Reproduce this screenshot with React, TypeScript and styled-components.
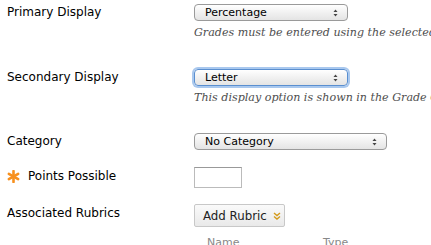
import React from "react"
import styled, { createGlobalStyle, css } from "styled-components"

const GlobalStyle = createGlobalStyle`
  html, body {
    margin: 0;
    padding: 0;
    background: #ffffff;
    overflow: hidden;
  }
  body {
    font-family: "DejaVu Sans", "Liberation Sans", sans-serif;
    color: #000;
  }
`

const Form = styled.div`
  display: flex;
  flex-direction: column;
  padding: 4px 0 0 7px;
  width: 424px;
`

const Row = styled.div<{ $gap: number }>`
  display: grid;
  grid-template-columns: 187px 1fr;
  align-items: start;
  margin-bottom: ${(p) => p.$gap}px;
`

const Label = styled.div<{ $top: number }>`
  display: flex;
  align-items: center;
  gap: 8px;
  font-size: 12px;
  line-height: 16px;
  padding-top: ${(p) => p.$top}px;
  white-space: nowrap;
`

const Field = styled.div`
  display: flex;
  flex-direction: column;
  gap: 5px;
  min-width: 0;
`

const SelectBox = styled.div<{ $width: number; $focused?: boolean }>`
  box-sizing: border-box;
  width: ${(p) => p.$width}px;
  height: 17px;
  border: 1px solid #9a9a9a;
  border-radius: 4px;
  background: linear-gradient(#ffffff, #f1f1f1 50%, #e4e4e4);
  display: flex;
  align-items: center;
  justify-content: space-between;
  padding: 0 9px 0 10px;
  font-size: 11px;
  ${(p) =>
    p.$focused &&
    css`
      border-color: #5a8fd0;
      box-shadow: 0 0 0 2px #a9c8ee;
    `}
`

const Hint = styled.div`
  font-family: "DejaVu Serif", "Liberation Serif", serif;
  font-style: italic;
  font-size: 11.1px;
  color: #4e4e4e;
  white-space: nowrap;
  overflow: hidden;
  line-height: 14px;
`

const TextInput = styled.div`
  box-sizing: border-box;
  width: 48px;
  height: 21px;
  border: 1px solid #bbb;
  border-top-color: #999;
  background: #fff;
`

const Button = styled.div`
  box-sizing: border-box;
  display: inline-flex;
  align-items: center;
  gap: 6px;
  width: 91px;
  height: 23px;
  padding: 0 0 0 8px;
  border: 1px solid #c8c8c8;
  border-radius: 2px;
  background: linear-gradient(#fafafa, #e9e9e9);
  font-size: 11.8px;
  color: #222;
`

const Columns = styled.div`
  display: flex;
  padding-left: 13px;
  font-size: 11px;
  color: #888;
  line-height: 14px;
`

const ColHead = styled.div<{ $w: number }>`
  width: ${(p) => p.$w}px;
`

const Arrows = () => (
  <svg width="5" height="8" viewBox="0 0 5 8">
    <path d="M2.5 0.5 L4.5 3 L0.5 3 Z" fill="#444" />
    <path d="M2.5 7.5 L4.5 5 L0.5 5 Z" fill="#444" />
  </svg>
)

const Chevrons = () => (
  <svg width="8" height="8" viewBox="0 0 8 8">
    <path d="M1 1 L4 3.5 L7 1" stroke="#d49a1a" strokeWidth="1.4" fill="none" />
    <path d="M1 4.5 L4 7 L7 4.5" stroke="#d49a1a" strokeWidth="1.4" fill="none" />
  </svg>
)

const RequiredStar = () => (
  <svg width="13" height="13" viewBox="0 0 12 12">
    <g stroke="#f7901e" strokeWidth="2.4" strokeLinecap="round">
      <path d="M6 1 L6 11" />
      <path d="M1.7 3.5 L10.3 8.5" />
      <path d="M1.7 8.5 L10.3 3.5" />
    </g>
  </svg>
)

const App: React.FC = () => (
  <>
    <GlobalStyle />
    <Form>
      <Row $gap={29}>
        <Label $top={0}>Primary Display</Label>
        <Field>
          <SelectBox $width={154}>
            <span>Percentage</span>
            <Arrows />
          </SelectBox>
          <Hint>Grades must be entered using the selected primary display</Hint>
        </Field>
      </Row>
      <Row $gap={28}>
        <Label $top={0}>Secondary Display</Label>
        <Field>
          <SelectBox $width={154} $focused>
            <span>Letter</span>
            <Arrows />
          </SelectBox>
          <Hint>This display option is shown in the Grade Center</Hint>
        </Field>
      </Row>
      <Row $gap={17}>
        <Label $top={0}>Category</Label>
        <Field>
          <SelectBox $width={193}>
            <span>No Category</span>
            <Arrows />
          </SelectBox>
        </Field>
      </Row>
      <Row $gap={16}>
        <Label $top={1}>
          <RequiredStar />
          Points Possible
        </Label>
        <Field>
          <TextInput />
        </Field>
      </Row>
      <Row $gap={9}>
        <Label $top={1}>Associated Rubrics</Label>
        <Field>
          <Button>
            Add Rubric
            <Chevrons />
          </Button>
        </Field>
      </Row>
      <Row $gap={0}>
        <div />
        <Columns>
          <ColHead $w={116}>Name</ColHead>
          <ColHead $w={60}>Type</ColHead>
        </Columns>
      </Row>
    </Form>
  </>
)

export default App
